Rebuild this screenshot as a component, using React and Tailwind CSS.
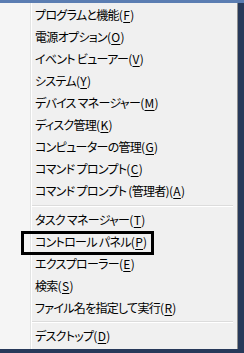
import React from "react";

const U = ({ c }) => <span className="underline underline-offset-2">{c}</span>;

const Item = ({ label, k, boxed }) => (
  <div className="relative h-[22px] flex items-center pl-[3px]">
    <span className="whitespace-nowrap">
      <span className="tracking-[-0.7px] [font-feature-settings:'palt']">{label}</span>
      <span className="tracking-[0.3px]">(<U c={k} />)</span>
    </span>
    {boxed && (
      <div className="absolute left-[-11px] top-0 w-[133px] h-[24px] border-[3px] border-black" />
    )}
  </div>
);

const Sep = ({ h }) => (
  <div className={`${h} flex flex-col justify-center pr-[4px]`}>
    <div className="h-px bg-[#dcdcdc]" />
    <div className="h-px bg-white" />
  </div>
);

export default function App() {
  return (
    <div
      className="w-[244px] h-[353px] bg-[#27395a] flex flex-col overflow-hidden text-[12px] text-black leading-none"
      style={{ fontFamily: '"Noto Sans CJK JP", "Noto Sans", sans-serif' }}
    >
      <div className="h-[3px] bg-[#5b7db2] shrink-0" />
      <div className="flex">
        <div className="w-[238px] h-[346px] bg-[#f0f0f0] border-r border-[#8f8f8f] flex">
          <div className="w-[31px] bg-[#f5f5f5] border-r border-[#e2e3e3] shrink-0" />
          <div className="flex-1 flex flex-col pt-[1px] border-l border-white">
            <Item label="プログラムと機能" k="F" />
            <Item label="電源オプション" k="O" />
            <Item label="イベント ビューアー" k="V" />
            <Item label="システム" k="Y" />
            <Item label="デバイス マネージャー" k="M" />
            <Item label="ディスク管理" k="K" />
            <Item label="コンピューターの管理" k="G" />
            <Item label="コマンド プロンプト" k="C" />
            <Item label="コマンド プロンプト (管理者)" k="A" />
            <Sep h="h-[7px]" />
            <Item label="タスク マネージャー" k="T" />
            <Item label="コントロール パネル" k="P" boxed />
            <Item label="エクスプローラー" k="E" />
            <Item label="検索" k="S" />
            <Item label="ファイル名を指定して実行" k="R" />
            <Sep h="h-[6px]" />
            <Item label="デスクトップ" k="D" />
          </div>
        </div>
      </div>
    </div>
  );
}
